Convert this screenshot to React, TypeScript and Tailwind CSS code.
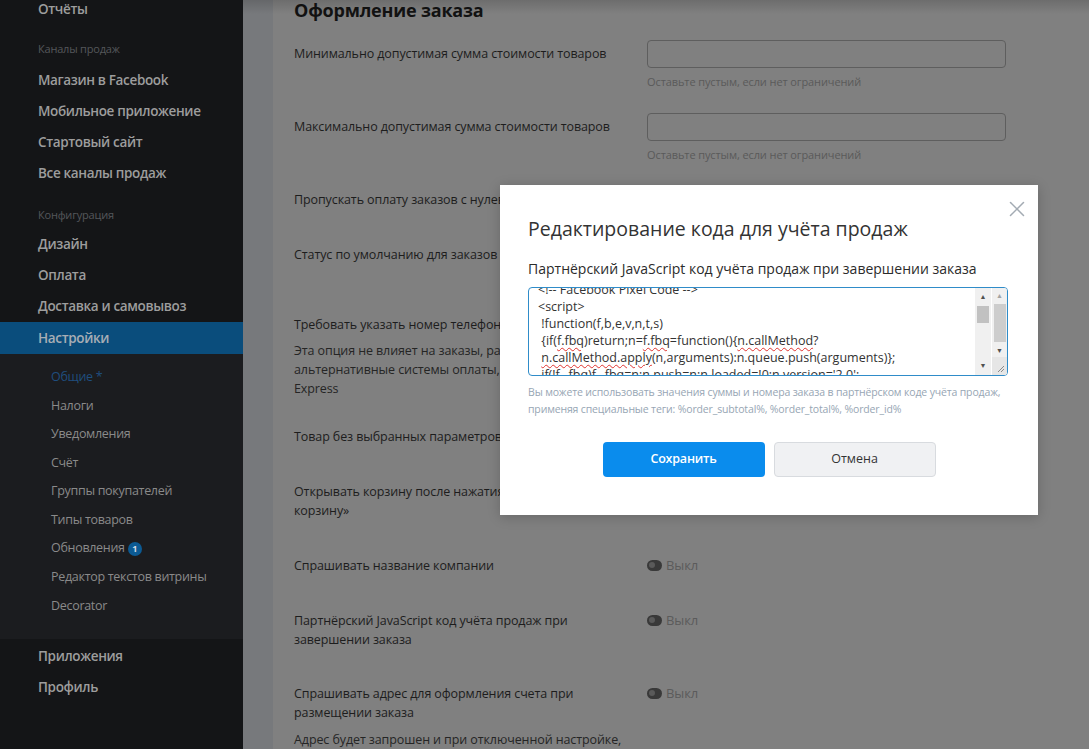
import { X } from 'lucide-react'

const mainTop = ['Магазин в Facebook', 'Мобильное приложение', 'Стартовый сайт', 'Все каналы продаж']
const config = ['Дизайн', 'Оплата', 'Доставка и самовывоз']
const sub = ['Налоги', 'Уведомления', 'Счёт', 'Группы покупателей', 'Типы товаров']

function NavItem({ children }: { children: React.ReactNode }) {
  return <div className="h-[31px] flex items-center px-[38px] whitespace-nowrap text-[13.5px] tracking-[-0.35px] font-semibold text-[#9d9d9d]">{children}</div>
}

function SubItem({ children }: { children: React.ReactNode }) {
  return <div className="h-[28.6px] flex items-center pl-[51px] whitespace-nowrap text-[12.5px] tracking-[-0.3px] text-[#8a8a8a]">{children}</div>
}

function Toggle() {
  return (
    <div className="flex items-center gap-[4px] h-[19px]">
      <span className="w-[15px] h-[11px] rounded-full bg-[#393939] flex items-center pl-[2px]">
        <span className="w-[6px] h-[6px] rounded-full bg-[#5a5a5a]" />
      </span>
      <span className="text-[13px] text-[#5b5b5b]">Выкл</span>
    </div>
  )
}

function Sq({ children }: { children: React.ReactNode }) {
  return <span className="underline decoration-wavy decoration-[#e0332f] decoration-1 underline-offset-2">{children}</span>
}

function Row({ label, right, pb }: { label: React.ReactNode; right?: React.ReactNode; pb: string }) {
  return (
    <div className={`flex ${pb}`}>
      <div className="w-[330px] pt-[4px] whitespace-nowrap">{label}</div>
      <div className="ml-[23px] pt-[4px]">{right ?? <Toggle />}</div>
    </div>
  )
}

function Field({ hint }: { hint: string }) {
  return (
    <div className="-mt-[4px] w-[359px]">
      <div className="h-[28px] rounded-[4px] border border-[#5e5e5e]" />
      <div className="mt-[6px] text-[11px] leading-[16px] text-[#5a5a5a] tracking-[-0.1px]">{hint}</div>
    </div>
  )
}

export default function App() {
  return (
    <div className="relative h-screen w-full overflow-hidden flex font-['Open_Sans',sans-serif]">
      {/* sidebar */}
      <aside className="w-[243px] shrink-0 bg-[#141517]">
        <div className="-mt-[6px]">
          <NavItem>Отчёты</NavItem>
          <div className="pt-[16px] pb-[8px] px-[38px] text-[11px] leading-[16px] tracking-[-0.2px] text-[#54575b]">Каналы продаж</div>
          {mainTop.map((t) => <NavItem key={t}>{t}</NavItem>)}
          <div className="pt-[18px] pb-[6px] px-[38px] text-[11px] leading-[16px] tracking-[-0.2px] text-[#54575b]">Конфигурация</div>
          {config.map((t) => <NavItem key={t}>{t}</NavItem>)}
          <div className="h-[32px] flex items-center px-[38px] text-[13.5px] tracking-[-0.35px] font-semibold text-[#a7aeb5] bg-[#0a4d7c]">Настройки</div>
          <div className="bg-[#1b1c1f] pt-[9px] pb-[18.5px]">
            <SubItem><span className="text-[#1f4e7e]">Общие *</span></SubItem>
            {sub.map((t) => <SubItem key={t}>{t}</SubItem>)}
            <SubItem>
              Обновления
              <span className="ml-[3px] w-[14px] h-[14px] rounded-full bg-[#0c5a93] text-[#d5dde4] text-[9px] font-bold flex items-center justify-center">1</span>
            </SubItem>
            <SubItem>Редактор текстов витрины</SubItem>
            <SubItem>Decorator</SubItem>
          </div>
          <div className="mt-[1.5px]">
            <NavItem>Приложения</NavItem>
            <NavItem>Профиль</NavItem>
          </div>
        </div>
      </aside>

      {/* main */}
      <main className="relative flex-1 flex bg-[#77797c] pl-[30px]">
        <div className="flex-1 bg-[#808080] pl-[21px] text-[12.5px] tracking-[-0.1px] leading-[19px] text-[#1d1d1d]">
          <h1 className="-mt-[2px] text-[18px] leading-[24px] font-bold tracking-[-0.2px] text-[#121212]">Оформление заказа</h1>

          <div className="mt-[18px]">
            <Row pb="pb-[23px]" label="Минимально допустимая сумма стоимости товаров" right={<Field hint="Оставьте пустым, если нет ограничений" />} />
            <Row pb="pb-[23px]" label="Максимально допустимая сумма стоимости товаров" right={<Field hint="Оставьте пустым, если нет ограничений" />} />
            <Row pb="pb-[32px]" label="Пропускать оплату заказов с нулевой суммой" />
            <Row pb="pb-[20px]" label="Статус по умолчанию для заказов" right={<Field hint="Статус новых заказов" />} />
            <Row
              pb="pb-[25px]"
              label={
                <>
                  <div>Требовать указать номер телефона</div>
                  <div className="mt-[6.5px] text-[#252525]">
                    Эта опция не влияет на заказы, размещённые через<br />
                    альтернативные системы оплаты, такие как PayPal<br />
                    Express
                  </div>
                </>
              }
            />
            <Row pb="pb-[32px]" label="Товар без выбранных параметров" />
            <Row pb="pb-[32px]" label={<>Открывать корзину после нажатия кнопки «Добавить в<br />корзину»</>} />
            <Row pb="pb-[32px]" label="Спрашивать название компании" />
            <Row pb="pb-[31px]" label={<>Партнёрский JavaScript код учёта продаж при<br />завершении заказа</>} />
            <Row
              pb="pb-0"
              label={
                <>
                  <div>Спрашивать адрес для оформления счета при<br />размещении заказа</div>
                  <div className="mt-[8px] text-[#252525]">Адрес будет запрошен и при отключенной настройке,</div>
                </>
              }
            />
          </div>
        </div>
        <div className="absolute top-0 left-0 right-0 h-[14px] bg-linear-to-b from-black/15 to-transparent" />
      </main>

      {/* modal */}
      <div className="absolute left-[500px] top-[185px] w-[538px] h-[330px] bg-white shadow-[0_2px_12px_rgba(0,0,0,0.2)] px-[28px] pt-[32px]">
        <button className="absolute top-[10.5px] right-[8.5px] text-[#a3abb3]">
          <X size={26} strokeWidth={1.4} />
        </button>
        <h2 className="-mt-[1px] text-[19.5px] leading-[26px] text-[#333]">Редактирование кода для учёта продаж</h2>
        <div className="mt-[18px] text-[14px] leading-[18px] text-[#2b2b2b]">Партнёрский JavaScript код учёта продаж при завершении заказа</div>

        <div className="mt-[9px] w-[480px] h-[89px] rounded-[4px] border border-[#2f8cc9] flex overflow-hidden">
          <div className="flex-1 overflow-hidden pl-[9px] text-[12.5px] leading-[17px] text-[#333] whitespace-pre">
            <div className="-mt-[7px]">
              <div>{'<!-- Facebook Pixel Code -->'}</div>
              <div>{'<script>'}</div>
              <div>{' !function(f,b,e,v,n,t,s)'}</div>
              <div>{' {if('}<Sq>f.fbq</Sq>{')return;n='}<Sq>f.fbq</Sq>{'=function(){'}<Sq>n.callMethod</Sq>{'?'}</div>
              <div>{' '}<Sq>n.callMethod.apply</Sq>{'(n,arguments):n.queue.push(arguments)};'}</div>
              <div>{" if(!f._fbq)f._fbq=n;n.push=n;n.loaded=!0;n.version='2.0';"}</div>
            </div>
          </div>
          <div className="w-[16px] bg-[#f0f0f0] flex flex-col items-center">
            <span className="mt-[5px] text-[7px] leading-[8px] text-[#505050]">▲</span>
            <span className="mt-[5px] w-[12px] h-[17px] bg-[#c1c1c1]" />
            <span className="flex-1" />
            <span className="mb-[5px] text-[7px] leading-[8px] text-[#505050]">▼</span>
          </div>
          <div className="ml-[1px] w-[15px] bg-[#f0f0f0] flex flex-col items-center">
            <span className="mt-[4px] text-[7px] leading-[8px] text-[#a3a3a3]">▲</span>
            <span className="mt-[4px] w-[12px] h-[38px] bg-[#cdcdcd]" />
            <span className="mt-[5px] text-[7px] leading-[8px] text-[#505050]">▼</span>
            <span className="flex-1" />
            <span className="w-full h-[18px] bg-[#e6e6e6] flex items-end justify-end">
              <svg width="10" height="10" viewBox="0 0 10 10" className="mb-[2px] mr-[2px]">
                <path d="M9 3 L3 9 M9 6 L6 9" stroke="#8a8a8a" strokeWidth="1" />
              </svg>
            </span>
          </div>
        </div>

        <p className="mt-[7.5px] whitespace-nowrap text-[10.5px] tracking-[-0.15px] leading-[17px] text-[#97a6b4]">
          Вы можете использовать значения суммы и номера заказа в партнёрском коде учёта продаж,<br />
          применяя специальные теги: %order_subtotal%, %order_total%, %order_id%
        </p>

        <div className="mt-[24.5px] flex justify-center gap-[9px]">
          <button className="w-[162px] h-[35px] rounded-[4px] bg-[#0a8ced] text-white text-[12.5px] font-semibold tracking-[-0.2px]">Сохранить</button>
          <button className="w-[162px] h-[35px] rounded-[4px] bg-[#f0f1f3] border border-[#d8dbdf] text-[#333] text-[12.5px]">Отмена</button>
        </div>
      </div>
    </div>
  )
}
